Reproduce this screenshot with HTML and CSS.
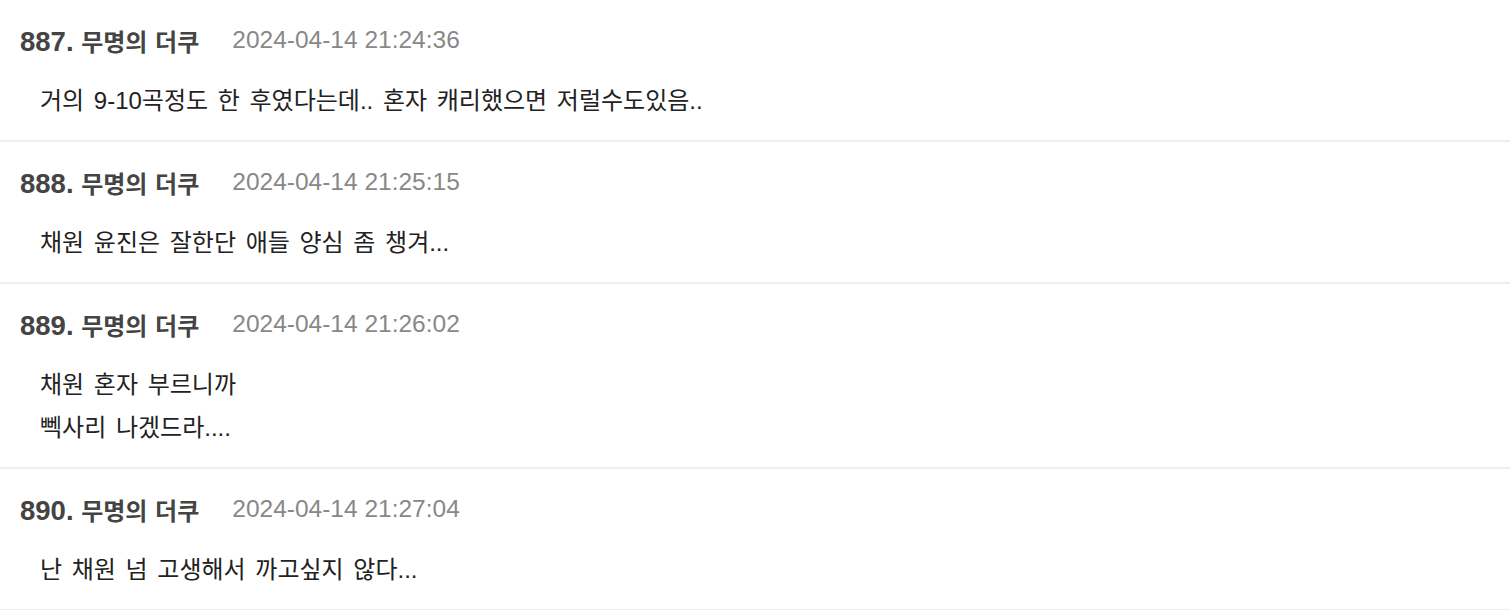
FILE: index.html
```html
<!DOCTYPE html>
<html lang="ko">
<head>
<meta charset="utf-8">
<link rel="stylesheet" href="styles.css">
</head>
<body>
<div class="list">
  <div class="post">
    <div class="head"><span class="name"><span class="num">887.</span> 무명의 더쿠</span><span class="date">2024-04-14 21:24:36</span></div>
    <div class="body">거의 9-10곡정도 한 후였다는데.. 혼자 캐리했으면 저럴수도있음..</div>
  </div>
  <div class="post">
    <div class="head"><span class="name"><span class="num">888.</span> 무명의 더쿠</span><span class="date">2024-04-14 21:25:15</span></div>
    <div class="body">채원 윤진은 잘한단 애들 양심 좀 챙겨...</div>
  </div>
  <div class="post">
    <div class="head"><span class="name"><span class="num">889.</span> 무명의 더쿠</span><span class="date">2024-04-14 21:26:02</span></div>
    <div class="body">채원 혼자 부르니까<br>뻭사리 나겠드라....</div>
  </div>
  <div class="post">
    <div class="head"><span class="name"><span class="num">890.</span> 무명의 더쿠</span><span class="date">2024-04-14 21:27:04</span></div>
    <div class="body">난 채원 넘 고생해서 까고싶지 않다...</div>
  </div>
</div>
</body>
</html>
```
FILE: styles.css
```css
html, body {
  margin: 0;
  padding: 0;
  background: #fff;
}
body {
  font-family: "Liberation Sans", "Noto Sans CJK KR", sans-serif;
}
.post {
  padding: 20px 20px 18px 20px;
  border-bottom: 2px solid #eeeeee;
}
.head {
  display: flex;
  align-items: center;
  height: 40px;
  gap: 33px;
}
.name {
  font-size: 24px;
  font-weight: 700;
  color: #444;
  word-spacing: 1px;
}
.num {
  font-size: 27.5px;
}
.date {
  font-size: 24.5px;
  color: #888;
}
.body {
  margin-top: 19px;
  padding-left: 20px;
  font-size: 24px;
  line-height: 43px;
  word-spacing: 3px;
  color: #222;
}
```
